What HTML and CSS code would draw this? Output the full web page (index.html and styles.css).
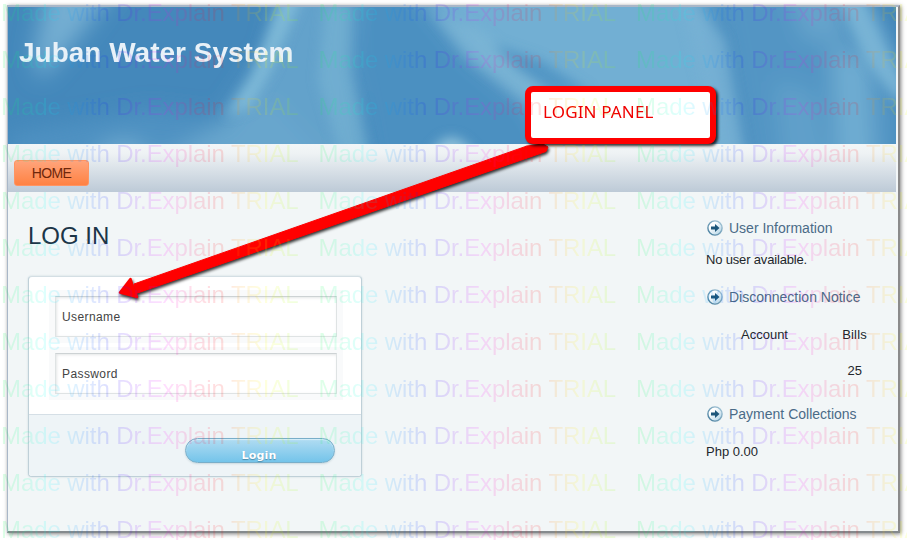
FILE: index.html
```html
<!DOCTYPE html>
<html lang="en">
<head>
<meta charset="utf-8">
<title>Juban Water System</title>
<link rel="stylesheet" href="styles.css">
</head>
<body>
<div class="page">
  <header class="banner">
    <svg class="waves" viewBox="8 7 888 137" preserveAspectRatio="none" aria-hidden="true">
      <defs>
        <filter id="soft" x="-30%" y="-30%" width="160%" height="160%"><feGaussianBlur stdDeviation="11"/></filter>
        <filter id="fine" x="-30%" y="-30%" width="160%" height="160%"><feGaussianBlur stdDeviation="6"/></filter>
      </defs>
      <rect x="8" y="7" width="888" height="137" fill="#4488bb"/>
      <g filter="url(#soft)">
        <path d="M50-25H125L80 35L40 80L34 55Z" fill="#74aed2"/>
        <path d="M285-20H360L350 60L360 180H195L225 115L270 50Z" fill="#64a2cb"/>
        <path d="M8 160V135L150 110L215 118L230 160Z" fill="#4f92c2"/>
        <path d="M150 165L270 95L330 160V180H150Z" fill="#68a6cd"/>
        <path d="M360-20H410L560 110L590 180H372L352 60Z" fill="#4b90c1"/>
        <path d="M400-30H700L740 180H570L530 105L470 55Z" fill="#72afd3"/>
        <path d="M710-30H900V180H750Z" fill="#5395c4"/>
        <path d="M80 180Q125 100 165 180Z" fill="#6eabd0"/>
        <path d="M832 45L868 60L875 180H838Z" fill="#70add2"/>
        <path d="M775 80L815 95L830 180H785Z" fill="#60a0ca"/>
        <path d="M785-20L830-20L845 40H805Z" fill="#66a4cc"/>
      </g>
      <g filter="url(#fine)">
        <path d="M282 -5H303L272 70L250 108L225 116L252 75Z" fill="#84bedb" opacity=".85"/>
        <path d="M325 5H350L350 70L370 160H342L318 80Z" fill="#78b3d4" opacity=".65"/>
        <path d="M430 10L480 30L545 90L535 108L470 60Z" fill="#80b9d7" opacity=".6"/>
        <path d="M492 44L540 60L590 92L550 92L515 68Z" fill="#4f93c3" opacity=".9"/>
        <path d="M680 -10L725 40L745 160L720 160Z" fill="#7ab4d5" opacity=".7"/>
        <path d="M834 -10H860L905 85L900 105L865 60Z" fill="#7fb8d8" opacity=".85"/>
        <path d="M870 -10H915V75Z" fill="#4588ba"/>
        <path d="M430 155Q450 120 475 155Z" fill="#8fc1da"/>
      </g>
    </svg>
    <h1 class="site-name">Juban Water System</h1>
  </header>
  <nav class="menu"><a class="tab">HOME</a></nav>
  <main class="content">
    <section class="login">
      <h2 class="heading">LOG IN</h2>
      <form class="card">
        <div class="fields">
          <div class="field"><span>Username</span></div>
          <div class="field"><span>Password</span></div>
        </div>
        <div class="actions"><button class="submit" type="button"><span>Login</span></button></div>
      </form>
    </section>
    <aside class="side">
      <h3 class="side-title"><svg class="bullet" viewBox="0 0 16 16"><use href="#go"/></svg><span>User Information</span></h3>
      <p class="note user"><span>No user available.</span></p>
      <h3 class="side-title second"><svg class="bullet" viewBox="0 0 16 16"><use href="#go"/></svg><span>Disconnection Notice</span></h3>
      <div class="table"><span>Account</span><span class="bills">Bills</span></div>
      <div class="total">25</div>
      <h3 class="side-title third"><svg class="bullet" viewBox="0 0 16 16"><use href="#go"/></svg><span>Payment Collections</span></h3>
      <p class="note php"><span>Php 0.00</span></p>
    </aside>
  </main>
</div>

<svg class="defs" width="0" height="0" aria-hidden="true">
  <defs>
    <linearGradient id="ball" x1="0" y1="0" x2="1" y2="1"><stop offset=".3" stop-color="#fff"/><stop offset="1" stop-color="#a9cfe3"/></linearGradient>
    <linearGradient id="rim" x1="1" y1="0" x2="0" y2="1"><stop offset="0" stop-color="#a9c9da"/><stop offset="1" stop-color="#427a9b"/></linearGradient>
    <symbol id="go" viewBox="0 0 16 16"><circle cx="8" cy="8" r="7.1" fill="url(#ball)" stroke="url(#rim)" stroke-width="1.4"/><path d="M4 6.400H8V4L12.500 8L8 12V9.600H4Z" fill="#1d567a"/></symbol>
  </defs>
</svg>

<svg class="arrow" viewBox="0 0 907 540" aria-hidden="true">
  <path d="M134 284L527 146L543 144L548 147L546 151.500L136 293.500Z" fill="#f00" stroke="#f00" stroke-width="1" stroke-linejoin="round"/>
  <path d="M120 292.500L130.500 279L133 287L137 297Z" fill="#f00" stroke="#f00" stroke-width="2.500" stroke-linejoin="round"/>
</svg>
<div class="callout"><span class="callout-text">LOGIN PANEL</span></div>
<div class="marks" id="marks"></div>
<script src="marks.js"></script>
</body>
</html>
```
FILE: styles.css
```css
* { box-sizing: border-box; }
body { margin: 0; width: 907px; height: 540px; overflow: hidden; background: #fff; font: 13px/16px "Liberation Sans", Arial, sans-serif; color: #22272c; position: relative; }
h1, h2, h3, p { margin: 0; font-weight: normal; }
.page { margin: 5px 0 0 7px; width: 893px; height: 528px; background: #f2f6f7; border: 1px solid #a9b7c8; border-width: 2px 0 2px 1px; border-bottom-color: #858a8d; border-right: 2px solid #8b8b8b; box-shadow: 1px 1px 4px rgba(0,0,0,.5); padding-right: 2px; }
.banner { position: relative; height: 137px; }
.waves { display: block; width: 888px; height: 137px; }
.site-name { position: absolute; left: 11px; top: 30px; font-size: 28px; line-height: 32px; font-weight: bold; color: #e8f1f8; white-space: nowrap; }
.menu { width: 888px; height: 48px; padding: 16px 0 0 6px; background: linear-gradient(#f2f6f7, #eef2f4 20%, #bdcad7); }
.tab { display: block; width: 75px; height: 26px; border: 1px solid #ff9462; border-radius: 3px; background: linear-gradient(#ffa47b, #ff8243); font-size: 14px; line-height: 25px; letter-spacing: -.6px; text-align: center; color: #6e270b; }
.content { display: flex; }
.login { width: 354px; padding: 28px 0 0 20px; }
.heading { font-size: 24px; line-height: 32px; color: #1c3547; white-space: nowrap; }
.card { margin: 24px 0 0; width: 334px; height: 201px; border: 1px solid #bfd0d8; border-top-color: #d4dfe4; border-radius: 4px; background: #fff; box-shadow: 0 0 2px rgba(90,140,160,.3); overflow: hidden; }
.fields { height: 138px; padding: 19px 0 0 26px; display: flex; flex-direction: column; gap: 16px; border-bottom: 1px solid #d5dfe6; }
.field { flex: none; width: 282px; height: 41px; padding-left: 6px; font-size: 12px; line-height: 41px; letter-spacing: .4px; color: #444; border: 1px solid #dfe3e4; border-top-color: #cdd2d4; box-shadow: 0 0 0 6px #f9fafb, inset 1px 1px 3px #e4e6e7; background: #fff; }
.actions { height: 62px; padding: 23px 26px 0 0; display: flex; justify-content: flex-end; background: #eef4f7; }
.submit { width: 150px; height: 25px; padding: 8px 2px 0 0; border: 1px solid #79aec9; border-radius: 13px; background: linear-gradient(#b1dcf2, #74c4ea); color: #fff; font: bold 11px/18px "DejaVu Sans", sans-serif; letter-spacing: .2px; text-shadow: 0 1px 1px #4e8cab; box-shadow: 0 1px 2px #cbd9df, inset 0 1px 1px #d8effa; }
.side { margin-left: 344px; width: 180px; padding-top: 28px; }
.side-title { display: flex; align-items: center; gap: 6px; height: 16px; padding-left: 1px; font-size: 14px; color: #4a6b87; white-space: nowrap; }
.bullet { width: 16px; height: 16px; flex: none; }
.note { white-space: nowrap; }
.user { margin-top: 16px; letter-spacing: -.17px; }
.second { margin-top: 21px; }
.table { display: flex; justify-content: space-between; padding: 22px 19px 0 35px; }
.bills { letter-spacing: .2px; }
.total { padding: 20px 24px 0 0; text-align: right; }
.third { margin-top: 27px; }
.php { margin-top: 22px; }
.defs { position: absolute; }
.arrow { position: absolute; inset: 0; width: 907px; height: 540px; fill: none; filter: drop-shadow(1.5px 2px 1.5px rgba(0,0,0,.8)); }
.callout { position: absolute; left: 525px; top: 86px; width: 191px; height: 58px; padding: 8px 0 0 12px; border: 6px solid #f00; border-radius: 8px; background: #fff; box-shadow: 2px 2px 3px rgba(0,0,0,.8); color: #f00000; font: 17px/24px "Noto Sans", sans-serif; letter-spacing: .15px; white-space: nowrap; }
.marks { position: absolute; left: 1px; top: 0; width: 906px; height: 540px; overflow: hidden; display: grid; grid-template-columns: repeat(3, 317.5px); grid-auto-rows: 47px; pointer-events: none; opacity: .13; }
.mark { justify-self: start; height: 32px; font-size: 24px; line-height: 26px; letter-spacing: -.08px; white-space: nowrap; color: transparent; background: linear-gradient(90deg, #0f4, #0ff 16%, #08f 26%, #00f 37%, #50f 42%, #f0f 55%, #f04 66%, #f00 74%, #f80 79%, #ff0 88%, #8f0); -webkit-background-clip: text; background-clip: text; }
```
FILE: marks.js
```js
const marks = document.getElementById('marks');
for (let i = 0; i < 36; i++) {
  const mark = document.createElement('span');
  mark.className = 'mark';
  mark.textContent = 'Made with Dr.Explain TRIAL';
  marks.append(mark);
}
```
